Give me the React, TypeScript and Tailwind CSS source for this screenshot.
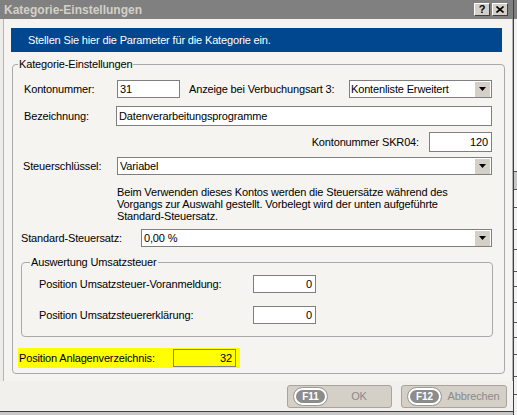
import React from "react";

const Tri = () => (
  <svg width="7" height="4" viewBox="0 0 7 4">
    <path d="M0 0H7L3.5 4Z" fill="#000" />
  </svg>
);

function DropBtn() {
  return (
    <div className="ml-auto mr-[1px] flex h-[15px] w-[15px] items-center justify-center bg-[#d4d0c8]">
      <Tri />
    </div>
  );
}

function Badge({ t }: { t: string }) {
  return (
    <div className="flex h-[17px] w-[33px] items-center justify-center rounded-full border-[2px] border-white bg-[#8c8c8c] text-[10px] font-bold leading-none tracking-normal text-white outline outline-1 outline-[#9a9a9a]">
      {t}
    </div>
  );
}

export default function App() {
  return (
    <div className="flex h-[415px] w-[517px] overflow-hidden bg-[#dcdcdc] font-['Liberation_Sans',Arial,sans-serif] text-[11px] tracking-[-0.15px] text-black">
      {/* dialog */}
      <div className="flex h-[415px] w-[514px] shrink-0 flex-col border-r border-[#404040] bg-[#edece8]">
        {/* title bar */}
        <div className="flex h-[19px] shrink-0 items-center bg-[#808080] pl-[4px] pr-[5px]">
          <span className="text-[12px] font-bold leading-none tracking-normal text-[#d4d0c8]">Kategorie-Einstellungen</span>
          <div className="ml-auto flex gap-[1px]">
            <div className="flex h-[13px] w-[16px] items-center justify-center border border-t-white border-l-white border-r-[#404040] border-b-[#404040] bg-[#d4d0c8] text-[11px] font-bold leading-none">
              ?
            </div>
            <div className="ml-[1px] flex h-[13px] w-[16px] items-center justify-center border border-t-white border-l-white border-r-[#404040] border-b-[#404040] bg-[#d4d0c8]">
              <svg width="8" height="7" viewBox="0 0 8 7">
                <path d="M0.5 0.5L7.5 6.5M7.5 0.5L0.5 6.5" stroke="#000" strokeWidth="1.6" />
              </svg>
            </div>
          </div>
        </div>

        {/* upper panel */}
        <div className="ml-[3px] flex h-[362px] w-[510px] shrink-0 flex-col border-x border-[#b4b4b4] bg-[#f5f4f1]">
          {/* banner */}
          <div className="ml-[7px] mt-[9px] flex h-[24px] w-[491px] items-center bg-[#00478f] pl-[17px] text-white">
            Stellen Sie hier die Parameter für die Kategorie ein.
          </div>

          {/* group box */}
          <div className="relative ml-[8px] mt-[12px] flex h-[310px] w-[493px] flex-col rounded-[4px] border border-[#a9a9a9]">
            <span className="absolute left-[5px] top-[-7px] bg-[#f5f4f1] px-[1px] leading-[13px]">
              Kategorie-Einstellungen
            </span>

            {/* row 1 */}
            <div className="mt-[15px] flex h-[18px] items-center pl-[11px]">
              <span className="w-[93px]">Kontonummer:</span>
              <div className="flex h-[18px] w-[63px] items-center border border-[#7f7f7f] bg-white pl-[2px]">31</div>
              <span className="ml-[9px] w-[160px]">Anzeige bei Verbuchungsart 3:</span>
              <div className="flex h-[18px] w-[143px] items-center border border-[#7f7f7f] bg-white pl-[1px]">
                <span>Kontenliste Erweitert</span>
                <DropBtn />
              </div>
            </div>

            {/* row 2 */}
            <div className="mt-[8px] flex h-[20px] items-center pl-[11px]">
              <span className="w-[92px]">Bezeichnung:</span>
              <div className="flex h-[20px] w-[376px] items-center border border-[#7f7f7f] bg-white pl-[2px]">
                Datenverarbeitungsprogramme
              </div>
            </div>

            {/* row 3 */}
            <div className="mt-[6px] flex h-[20px] w-[479px] items-center justify-end">
              <span>Kontonummer SKR04:</span>
              <div className="ml-[10px] flex h-[20px] w-[63px] items-center justify-end border border-[#7f7f7f] bg-white pr-[3px]">
                120
              </div>
            </div>

            {/* row 4 */}
            <div className="mt-[5px] flex h-[18px] items-center pl-[10px]">
              <span className="w-[94px]">Steuerschlüssel:</span>
              <div className="flex h-[18px] w-[375px] items-center border border-[#7f7f7f] bg-white pl-[2px]">
                <span>Variabel</span>
                <DropBtn />
              </div>
            </div>

            {/* paragraph */}
            <p className="mt-[11px] pl-[104px] leading-[12px]">
              Beim Verwenden dieses Kontos werden die Steuersätze während des
              <br />
              Vorgangs zur Auswahl gestellt. Vorbelegt wird der unten aufgeführte
              <br />
              Standard-Steuersatz.
            </p>

            {/* row 5 */}
            <div className="mt-[7px] flex h-[18px] items-center pl-[8px]">
              <span className="w-[120px]">Standard-Steuersatz:</span>
              <div className="flex h-[18px] w-[351px] items-center border border-[#7f7f7f] bg-white pl-[2px]">
                <span>0,00 %</span>
                <DropBtn />
              </div>
            </div>

            {/* inner group */}
            <div className="relative ml-[8px] mt-[15px] flex h-[75px] w-[472px] flex-col rounded-[4px] border border-[#a9a9a9]">
              <span className="absolute left-[8px] top-[-7px] bg-[#f5f4f1] px-[1px] leading-[13px]">
                Auswertung Umsatzsteuer
              </span>
              <div className="mt-[12px] flex h-[18px] items-center pl-[17px]">
                <span className="w-[214px]">Position Umsatzsteuer-Voranmeldung:</span>
                <div className="flex h-[18px] w-[63px] items-center justify-end border border-[#7f7f7f] bg-white pr-[3px]">
                  0
                </div>
              </div>
              <div className="mt-[13px] flex h-[18px] items-center pl-[17px]">
                <span className="w-[214px]">Position Umsatzsteuererklärung:</span>
                <div className="flex h-[18px] w-[63px] items-center justify-end border border-[#7f7f7f] bg-white pr-[3px]">
                  0
                </div>
              </div>
            </div>

            {/* highlighted row */}
            <div className="ml-[5px] mt-[11px] flex h-[20px] w-[222px] items-center bg-[#ffff00] pl-[1px]">
              <span className="w-[154px]">Position Anlagenverzeichnis:</span>
              <div className="flex h-[18px] w-[63px] items-center justify-end border border-[#7f7f7f] pr-[3px]">
                32
              </div>
            </div>
          </div>
        </div>

        {/* footer */}
        <div className="flex h-[30px] w-[513px] shrink-0 items-start bg-[#f1f0ed] pl-[287px] pt-[4px]">
          <div className="flex h-[23px] w-[105px] items-center rounded-[3px] border border-[#a8a49c] bg-[#d4d0c8] pl-[6px] text-[#8a8a8a]">
            <Badge t="F11" />
            <span className="flex-1 text-center">OK</span>
          </div>
          <div className="ml-[9px] flex h-[23px] w-[106px] items-center rounded-[3px] border border-[#a8a49c] bg-[#d4d0c8] pl-[6px] text-[#8a8a8a]">
            <Badge t="F12" />
            <span className="flex-1 text-center">Abbrechen</span>
          </div>
        </div>
        <div className="h-[1px] w-full bg-[#404040]" />
        <div className="flex-1 bg-[#c8c8c8]" />
      </div>

      {/* background window strip */}
      <div className="flex w-[3px] flex-col bg-[#f2f2f2]">
        <div className="h-[19px] shrink-0 bg-[#808080]" />
        <div className="h-[96px] shrink-0" />
        <div className="h-[57px] shrink-0 border-b border-[#555]" />
        <div className="h-[18px] shrink-0 border-b border-[#555] bg-[#c8c8c8]" />
        <div className="h-[18px] shrink-0 border-b border-[#555]" />
        <div className="h-[22px] shrink-0 border-b border-[#555]" />
        <div className="h-[20px] shrink-0 border-b border-[#555]" />
        <div className="h-[22px] shrink-0 border-b border-[#555]" />
        <div className="h-[15px] shrink-0 border-b border-[#555]" />
        <div className="h-[16px] shrink-0 border-b border-[#555]" />
        <div className="h-[20px] shrink-0 border-b border-[#555]" />
        <div className="h-[15px] shrink-0 border-b border-[#555]" />
        <div className="h-[17px] shrink-0 border-b border-[#555]" />
        <div className="h-[22px] shrink-0 border-b border-[#555]" />
        <div className="h-[18px] shrink-0 border-b border-[#555]" />
        <div className="flex-1" />
      </div>
    </div>
  );
}
